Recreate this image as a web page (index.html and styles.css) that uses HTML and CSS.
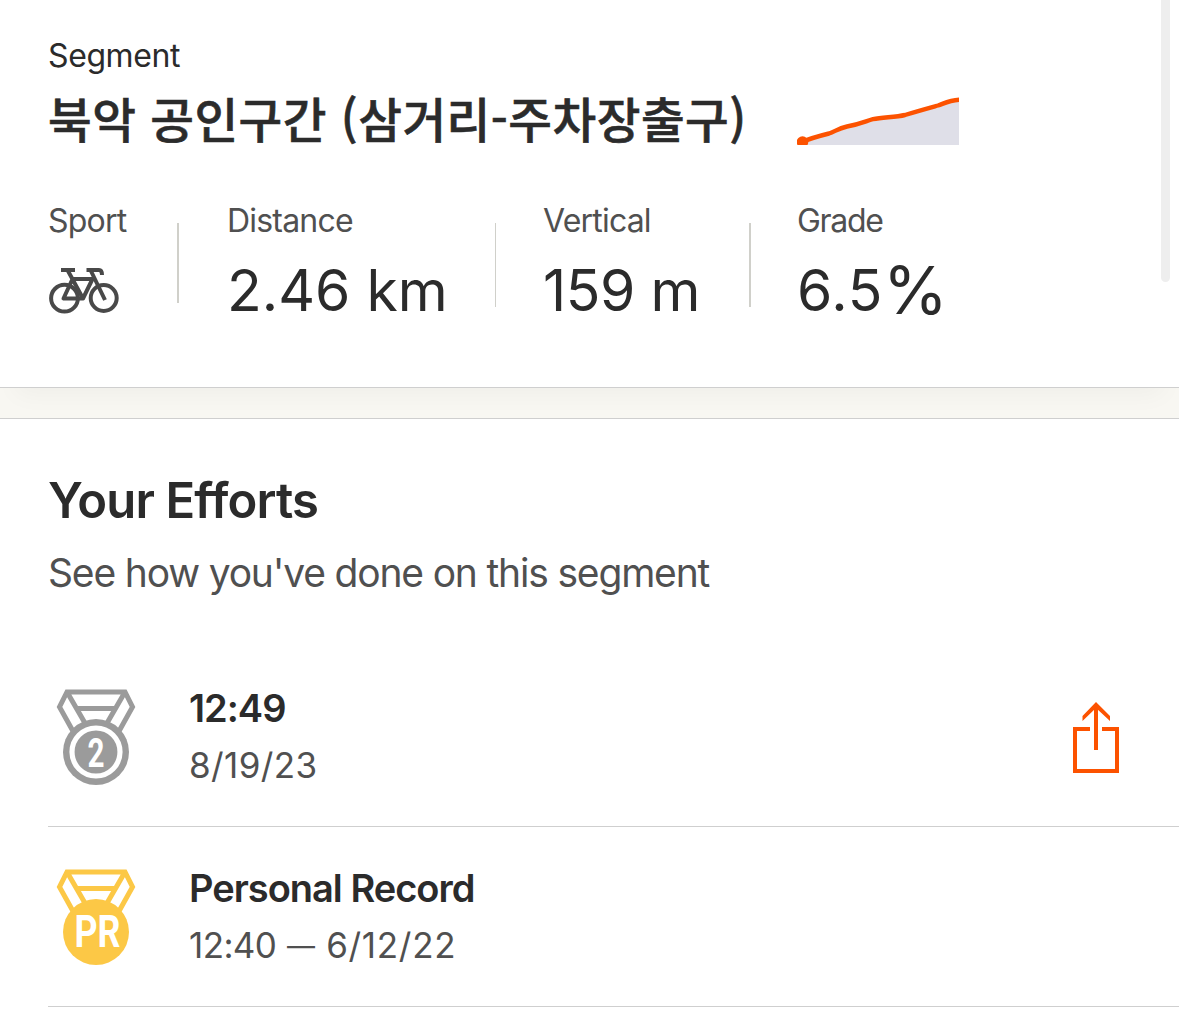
FILE: index.html
```html
<!DOCTYPE html>
<html lang="en">
<head>
  <meta charset="UTF-8">
  <title>Segment</title>
  <meta name="viewport" content="width=device-width, initial-scale=1">
  <link rel="stylesheet" href="styles.css">
</head>
<body>
  <div class="scrollbar"></div>

  <header class="segment">
    <div class="segment-label">Segment</div>
    <div class="title-row">
      <h1 lang="ko">북악 공인구간 (삼거리-주차장출구)</h1>
      <svg class="elevation" viewBox="0 0 162 48">
        <path fill="#dfdfe8" d="M5 45 L33 37 L60 28 L90 21 L115 17 L142 9 L162 2 V48 H5Z"/>
        <path fill="none" stroke="#fc5200" stroke-width="4.4" d="M5 45 C14 41 24 38.5 32 36.5 C38 34.5 41 31.5 50 29.5 C64 27 69 24 76 22.2 C86 20 98 20.5 108 18 C121 14 132 11 141 8.5 C148 6 153 3 163 2.7"/>
        <circle fill="#fc5200" cx="5.5" cy="45" r="5.8"/>
      </svg>
    </div>

    <div class="stats">
      <div class="stat sport">
        <div class="stat-label">Sport</div>
        <svg class="bike" viewBox="0 0 70 48" fill="none" stroke="#494949" stroke-width="4">
          <circle cx="15.5" cy="32.2" r="13.4"/>
          <circle cx="54.7" cy="32" r="13"/>
          <path d="M12 4 H26 M18.5 4 L34 32.5 L43.5 13 H23.5 L14.5 32.5 H34" stroke-linejoin="round"/>
          <path d="M37.5 4 H50 Q53 4 53 9 M41.5 4 L56 34"/>
        </svg>
      </div>
      <div class="divider short"></div>
      <div class="stat distance">
        <div class="stat-label">Distance</div>
        <div class="stat-value">2.46 km</div>
      </div>
      <div class="divider thin"></div>
      <div class="stat vertical">
        <div class="stat-label">Vertical</div>
        <div class="stat-value">159 m</div>
      </div>
      <div class="divider"></div>
      <div class="stat grade">
        <div class="stat-label">Grade</div>
        <div class="stat-value">6.5<span class="percent">%</span></div>
      </div>
    </div>
  </header>

  <div class="gap"></div>

  <section class="efforts">
    <h2>Your Efforts</h2>
    <p class="subtitle">See how you've done on this segment</p>

    <div class="effort">
      <svg class="medal silver" viewBox="0 0 80 98">
        <path class="ribbon" d="M18 45 L3.5 19 L11 4 H69 L76.5 19 L62 45 M11 4 L29.5 36 M69 4 L50.5 36 M20 20.5 H60"/>
        <circle class="disc" cx="40" cy="64" r="33"/>
        <circle cx="40" cy="64" r="24" fill="none" stroke="#fff" stroke-width="5.2"/>
        <text class="mark two" x="31.5" y="78.5" textLength="17" lengthAdjust="spacingAndGlyphs">2</text>
      </svg>
      <div class="effort-text">
        <div class="effort-title">12:49</div>
        <div class="effort-date">8/19/23</div>
      </div>
      <svg class="share" viewBox="0 0 48 72" fill="none" stroke="#fc5200" stroke-width="4">
        <path d="M18 27 H3 V69 H45 V27 H30"/>
        <path d="M24 48 V3"/>
        <path fill="#fc5200" stroke="none" d="M24 0 L38 14 V19 L24 6 L10.5 19 V14Z"/>
      </svg>
    </div>

    <div class="effort">
      <svg class="medal gold" viewBox="0 0 80 98">
        <path class="ribbon" d="M18 45 L3.5 19 L11 4 H69 L76.5 19 L62 45 M11 4 L29.5 36 M69 4 L50.5 36 M20 20.5 H60"/>
        <circle class="disc" cx="40" cy="64" r="33"/>
        <text class="mark pr" x="18.5" y="79" textLength="46" lengthAdjust="spacingAndGlyphs">PR</text>
      </svg>
      <div class="effort-text">
        <div class="effort-title">Personal Record</div>
        <div class="effort-date"><span class="time">12:40</span> <span class="dash">—</span> 6/12/22</div>
      </div>
    </div>
  </section>
</body>
</html>
```

FILE: styles.css
```css
* { box-sizing: border-box; margin: 0; padding: 0; }
body {
  font-family: Inter, "Noto Sans CJK KR", sans-serif;
  background: #fff;
  color: #2b2b2b;
  height: 1009px;
  overflow: hidden;
}
svg { display: block; flex: none; }

.scrollbar {
  position: absolute;
  z-index: 2;
  top: 0;
  right: 9px;
  width: 9px;
  height: 282px;
  border-radius: 0 0 5px 5px;
  background: #eee;
}

.segment {
  position: relative;
  z-index: 1;
  height: 388px;
  padding: 36px 48px 0;
  border-bottom: 1px solid #cfcfcf;
  background: #fff;
  box-shadow: 0 22px 24px -16px rgba(0,0,20,0.04);
}
.segment-label {
  font-size: 32px;
  line-height: 40px;
  letter-spacing: -0.4px;
}
.title-row {
  display: flex;
  height: 86px;
}
h1 {
  width: 749px;
  font-family: "Noto Sans CJK KR", sans-serif;
  font-size: 47.5px;
  font-weight: 500;
  line-height: 83px;
  letter-spacing: 0.5px;
  white-space: nowrap;
  -webkit-text-stroke: 0.6px #2b2b2b;
}
.elevation {
  width: 162px;
  height: 48px;
  margin-top: 21px;
}

.stats {
  display: flex;
  margin-top: 38px;
  white-space: nowrap;
}
.stat-label {
  font-size: 32px;
  line-height: 42px;
  letter-spacing: -0.8px;
  color: #505050;
}
.grade .stat-label { letter-spacing: -1.3px; }
.stat-value {
  margin-top: 14px;
  font-size: 57px;
  line-height: 70px;
  letter-spacing: -0.4px;
}
.distance .stat-value { letter-spacing: 0; }
.grade .stat-value { letter-spacing: 0.8px; }
.percent {
  font-size: 66px;
  line-height: 0;
  vertical-align: -3px;
}
.sport { width: 129px; }
.distance { width: 316px; padding-left: 48px; }
.vertical { width: 253px; padding-left: 47px; }
.grade { padding-left: 46px; }
.divider {
  width: 2px;
  height: 84px;
  margin-top: 23px;
  background: #d0d0ca;
}
.divider.short { height: 80px; }
.divider.thin { width: 1px; }
.bike {
  width: 70px;
  height: 48px;
  margin: 24px 0 0 1px;
}

.gap {
  height: 31px;
  border-bottom: 1px solid #cfcfcf;
  background: #f8f7f2;
}

.efforts {
  position: relative;
  z-index: 2;
  padding: 51px 0 0 48px;
  background: #fff;
}
h2 {
  font-size: 49px;
  font-weight: 600;
  line-height: 62px;
  letter-spacing: -0.85px;
}
.subtitle {
  margin-top: 15px;
  font-size: 39px;
  line-height: 52px;
  letter-spacing: -1.18px;
  color: #505050;
}
.effort {
  display: flex;
  height: 180px;
  border-bottom: 1px solid #cfcfcf;
}
.subtitle + .effort { margin-top: 48px; }
.medal {
  width: 80px;
  height: 98px;
  margin: 41px 53px 0 8px;
}
.ribbon { fill: none; stroke-width: 5; }
.silver .ribbon { stroke: #9b9b9b; }
.silver .disc { fill: #9b9b9b; }
.gold .ribbon { stroke: #fcc846; }
.gold .disc { fill: #fcc846; }
.mark {
  fill: #fff;
  font-family: Roboto, sans-serif;
  font-weight: 700;
}
.two { font-size: 40px; }
.pr { font-size: 44px; }
.effort-text {
  flex: 1;
  padding-top: 36px;
}
.effort-title {
  font-size: 38px;
  font-weight: 600;
  line-height: 50px;
  letter-spacing: -1px;
}
.effort-date {
  margin-top: 8px;
  font-size: 35px;
  line-height: 48px;
  letter-spacing: 0.4px;
  color: #505050;
}
.gold + .effort-text .effort-date { letter-spacing: 0.7px; }
.effort-date .time { letter-spacing: -0.6px; }
.dash { font-size: 28px; line-height: 0; vertical-align: 2px; }
.share {
  width: 48px;
  height: 72px;
  margin: 55px 59px 0 0;
}
```
